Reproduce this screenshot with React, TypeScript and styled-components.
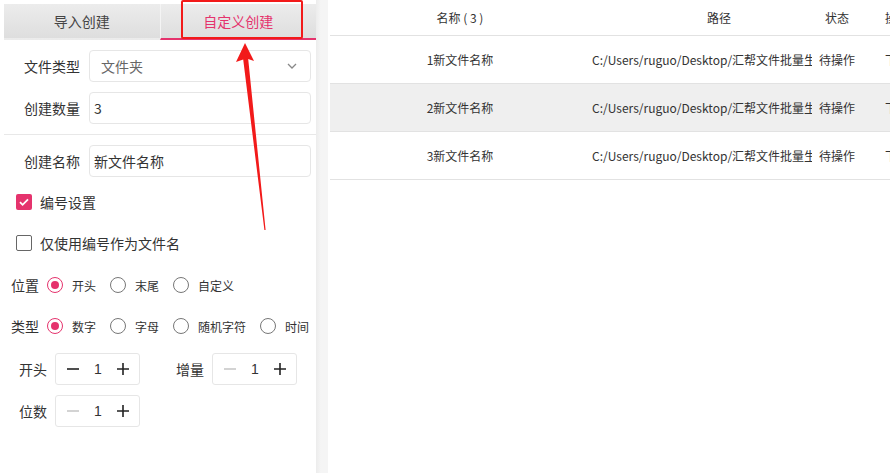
import React from 'react'
import styled, { createGlobalStyle } from 'styled-components'

const GlobalStyle = createGlobalStyle`
  html, body {
    margin: 0;
    padding: 0;
    background: #ffffff;
  }
  body {
    font-family: 'Noto Sans CJK SC', 'Noto Sans', sans-serif;
    color: #333333;
  }
`

const PINK = '#e5336d'

const rows = [
  { name: '1新文件名称', bg: '#ffffff' },
  { name: '2新文件名称', bg: '#efefef' },
  { name: '3新文件名称', bg: '#ffffff' },
]
const path = 'C:/Users/ruguo/Desktop/汇帮文件批量生成器'

const Radio = ({ checked, label }: { checked?: boolean; label: string }) => (
  <RadioOption>
    <RadioDot $checked={checked} />
    <span>{label}</span>
  </RadioOption>
)

const Stepper = ({ minusDisabled }: { minusDisabled?: boolean }) => (
  <StepperBox>
    <StepBtn $disabled={minusDisabled}>
      <svg width='14' height='14' viewBox='0 0 14 14'>
        <path d='M1 7h12' stroke='currentColor' strokeWidth='1.6' />
      </svg>
    </StepBtn>
    <StepValue>1</StepValue>
    <StepBtn>
      <svg width='14' height='14' viewBox='0 0 14 14'>
        <path d='M1 7h12M7 1v12' stroke='currentColor' strokeWidth='1.6' />
      </svg>
    </StepBtn>
  </StepperBox>
)

const App = () => {
  return (
    <Page>
      <GlobalStyle />
      <LeftPanel>
        <Tabs>
          <Tab>导入创建</Tab>
          <Tab $active>自定义创建</Tab>
        </Tabs>

        <FieldRow $top={10}>
          <FieldLabel>文件类型</FieldLabel>
          <InputBox $muted>
            文件夹
            <svg width='12' height='12' viewBox='0 0 12 12'>
              <path d='M2 4l4 4 4-4' fill='none' stroke='#888' strokeWidth='1.3' />
            </svg>
          </InputBox>
        </FieldRow>
        <FieldRow $top={10}>
          <FieldLabel>创建数量</FieldLabel>
          <InputBox>3</InputBox>
        </FieldRow>

        <Divider />

        <FieldRow $top={10}>
          <FieldLabel>创建名称</FieldLabel>
          <InputBox>新文件名称</InputBox>
        </FieldRow>

        <CheckRow $top={15}>
          <CheckBox $checked>
            <svg width='12' height='12' viewBox='0 0 12 12'>
              <path d='M2 6.2l2.6 2.6L10 3.4' fill='none' stroke='#fff' strokeWidth='1.8' />
            </svg>
          </CheckBox>
          编号设置
        </CheckRow>
        <CheckRow $top={21}>
          <CheckBox />
          仅使用编号作为文件名
        </CheckRow>

        <RadioRow $top={20}>
          <RadioLabel>位置</RadioLabel>
          <Radio checked label='开头' />
          <Radio label='末尾' />
          <Radio label='自定义' />
        </RadioRow>
        <RadioRow $top={17}>
          <RadioLabel>类型</RadioLabel>
          <Radio checked label='数字' />
          <Radio label='字母' />
          <Radio label='随机字符' />
          <Radio label='时间' />
        </RadioRow>

        <StepRow $top={15}>
          <StepGroup>
            <StepLabel>开头</StepLabel>
            <Stepper />
          </StepGroup>
          <StepGroup>
            <StepLabel>增量</StepLabel>
            <Stepper minusDisabled />
          </StepGroup>
        </StepRow>
        <StepRow $top={10}>
          <StepGroup>
            <StepLabel>位数</StepLabel>
            <Stepper minusDisabled />
          </StepGroup>
        </StepRow>
      </LeftPanel>

      <Gutter />

      <RightPanel>
        <TableRow $header>
          <NameCell>名称 ( 3 )</NameCell>
          <PathHeadCell>路径</PathHeadCell>
          <StatusCell>状态</StatusCell>
          <OpCell>操作</OpCell>
        </TableRow>
        {rows.map(r => (
          <TableRow key={r.name} style={{ background: r.bg }}>
            <NameCell>{r.name}</NameCell>
            <PathCell>{path}</PathCell>
            <StatusCell>待操作</StatusCell>
            <OpCell>下载</OpCell>
          </TableRow>
        ))}
      </RightPanel>

      <Annotation>
        <HighlightBox />
        <svg width='60' height='200' viewBox='0 0 60 200' style={{ position: 'absolute', left: 220, top: 40 }}>
          <polygon points='25,3 34,21 28.2,19 45.6,190 44.4,190 23.2,19.6 16,22' fill='#f21a1a' />
        </svg>
      </Annotation>
    </Page>
  )
}

const Page = styled.div`
  position: relative;
  display: flex;
  width: 890px;
  height: 473px;
  overflow: hidden;
  background: #ffffff;
`

const LeftPanel = styled.div`
  width: 316px;
  flex-shrink: 0;
  display: flex;
  flex-direction: column;
  background: #ffffff;
`

const Tabs = styled.div`
  display: flex;
  margin: 4px 0 0 4px;
  height: 36px;
`

const Tab = styled.div<{ $active?: boolean }>`
  flex: 1;
  display: flex;
  align-items: center;
  justify-content: center;
  font-size: 14px;
  color: ${p => (p.$active ? PINK : '#444')};
  background: linear-gradient(#ececec, #dedede);
  border-bottom: 2px solid ${p => (p.$active ? PINK : 'transparent')};
  box-sizing: border-box;
  border-left: ${p => (p.$active ? '1px solid #f4f4f4' : 'none')};
`

const FieldRow = styled.div<{ $top: number }>`
  display: flex;
  align-items: center;
  margin-top: ${p => p.$top}px;
`

const FieldLabel = styled.div`
  width: 80px;
  text-align: right;
  font-size: 14px;
  color: #333;
  margin-right: 9px;
`

const InputBox = styled.div<{ $muted?: boolean }>`
  width: 222px;
  height: 32px;
  box-sizing: border-box;
  border: 1px solid #e6e6e6;
  border-radius: 4px;
  display: flex;
  align-items: center;
  justify-content: space-between;
  padding: 0 12px 0 ${p => (p.$muted ? '11px' : '4px')};
  font-size: 14px;
  color: ${p => (p.$muted ? '#666' : '#333')};
`

const Divider = styled.div`
  margin: 10px 0 0 4px;
  height: 1px;
  background: #e8e8e8;
`

const CheckRow = styled.div<{ $top: number }>`
  display: flex;
  align-items: center;
  margin: ${p => p.$top}px 0 0 16px;
  font-size: 14px;
  color: #333;
  height: 20px;
`

const CheckBox = styled.div<{ $checked?: boolean }>`
  width: 16px;
  height: 16px;
  box-sizing: border-box;
  border-radius: 2px;
  margin-right: 8px;
  display: flex;
  align-items: center;
  justify-content: center;
  background: ${p => (p.$checked ? PINK : '#fff')};
  border: ${p => (p.$checked ? 'none' : '1.5px solid #666')};
`

const RadioRow = styled.div<{ $top: number }>`
  display: flex;
  align-items: center;
  margin: ${p => p.$top}px 0 0 11px;
  height: 24px;
  white-space: nowrap;
`

const RadioLabel = styled.span`
  font-size: 14px;
  color: #333;
  margin-right: 8px;
  flex-shrink: 0;
`

const RadioOption = styled.label`
  display: flex;
  align-items: center;
  flex-shrink: 0;
  font-size: 12px;
  color: #333;
  margin-right: 14px;
  &:last-child {
    margin-right: 0;
  }
`

const RadioDot = styled.span<{ $checked?: boolean }>`
  width: 16px;
  height: 16px;
  flex-shrink: 0;
  box-sizing: border-box;
  border-radius: 50%;
  margin-right: 9px;
  border: 1.5px solid ${p => (p.$checked ? PINK : '#777')};
  display: flex;
  align-items: center;
  justify-content: center;
  &::after {
    content: '';
    width: 8px;
    height: 8px;
    border-radius: 50%;
    background: ${p => (p.$checked ? PINK : 'transparent')};
  }
`

const StepRow = styled.div<{ $top: number }>`
  display: flex;
  margin: ${p => p.$top}px 0 0 19px;
  gap: 36px;
`

const StepGroup = styled.div`
  display: flex;
  align-items: center;
`

const StepLabel = styled.span`
  font-size: 14px;
  color: #333;
  margin-right: 8px;
`

const StepperBox = styled.div`
  width: 85px;
  height: 32px;
  box-sizing: border-box;
  border: 1px solid #e6e6e6;
  border-radius: 3px;
  display: flex;
  align-items: center;
  justify-content: space-between;
  padding: 0 9px 0 10px;
`

const StepBtn = styled.span<{ $disabled?: boolean }>`
  display: flex;
  color: ${p => (p.$disabled ? '#c8c8c8' : '#222')};
`

const StepValue = styled.span`
  font-family: 'Liberation Sans', Arial, sans-serif;
  font-size: 14px;
  color: #333;
`

const Gutter = styled.div`
  width: 12px;
  flex-shrink: 0;
  background: linear-gradient(90deg, #ececec, #f5f5f5 40%, #f5f5f5);
`

const RightPanel = styled.div`
  flex: 1;
  padding-left: 2px;
  display: flex;
  flex-direction: column;
  background: #ffffff;
`

const TableRow = styled.div<{ $header?: boolean }>`
  display: grid;
  grid-template-columns: 260px 222px 50px 1fr;
  align-items: center;
  height: ${p => (p.$header ? '35px' : '47px')};
  border-bottom: 1px solid #e2e2e2;
  font-size: 12px;
  color: #333;
`

const NameCell = styled.div`
  text-align: center;
  white-space: pre;
`

const PathCell = styled.div`
  padding-left: 2px;
  white-space: nowrap;
  overflow: hidden;
`

const PathHeadCell = styled.div`
  padding-left: 117px;
`

const StatusCell = styled.div`
  text-align: center;
  white-space: nowrap;
`

const OpCell = styled.div`
  padding-left: 23px;
  white-space: nowrap;
`

const Annotation = styled.div`
  position: absolute;
  inset: 0;
  pointer-events: none;
`

const HighlightBox = styled.div`
  position: absolute;
  left: 181px;
  top: 0;
  width: 122px;
  height: 39px;
  box-sizing: border-box;
  border: 2.5px solid #f21a1a;
  border-radius: 2px;
`

export default App
